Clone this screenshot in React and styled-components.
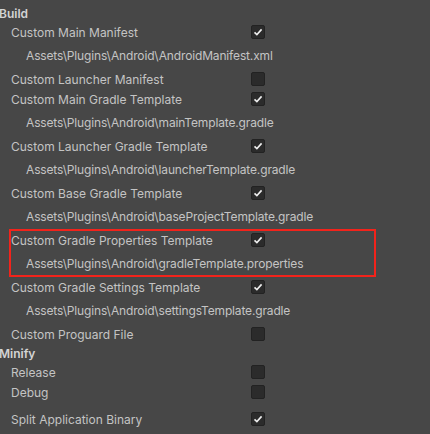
import React from "react";
import styled, { createGlobalStyle } from "styled-components";

const GlobalStyle = createGlobalStyle`
  html, body {
    margin: 0;
    padding: 0;
    background: #474747;
  }
  body {
    font-family: Inter, "Noto Sans", "Liberation Sans", sans-serif;
    font-size: 12px;
    color: #c4c4c4;
  }
`;

const Panel = styled.div`
  width: 430px;
  height: 434px;
  padding-top: 4px;
  box-sizing: border-box;
  overflow: hidden;
  display: flex;
  flex-direction: column;
`;

const Header = styled.div`
  height: 18px;
  display: flex;
  align-items: center;
  margin-left: -1px;
  font-weight: 600;
  color: #d4d4d4;
`;

const Row = styled.div`
  height: 20px;
  display: flex;
  align-items: center;
  padding-left: 11px;
  margin-top: ${(p) => p.$gap || 0}px;
`;

const Label = styled.span`
  width: 240px;
  white-space: nowrap;
`;

const PathRow = styled.div`
  height: 27px;
  display: flex;
  align-items: center;
  padding-left: 26px;
  padding-bottom: 1px;
  box-sizing: border-box;
  white-space: nowrap;
  letter-spacing: -0.15px;
`;

const Box = styled.div`
  width: 14px;
  height: 14px;
  box-sizing: border-box;
  background: #2b2b2b;
  border: 1px solid #222;
  border-radius: 2px;
  display: flex;
  align-items: center;
  justify-content: center;
`;

const Highlight = styled.div`
  position: relative;
  &::after {
    content: "";
    position: absolute;
    left: 9px;
    top: -1px;
    width: 367px;
    height: 48px;
    box-sizing: border-box;
    border: 2px solid #f2231b;
    pointer-events: none;
  }
`;

const Check = ({ on }) => (
  <Box>
    {on && (
      <svg width="10" height="10" viewBox="0 0 10 10">
        <path d="M1.5 5.3 L3.9 7.6 L8.6 2.4" fill="none" stroke="#eeeeee" strokeWidth="1.6" />
      </svg>
    )}
  </Box>
);

const Toggle = ({ label, on, gap }) => (
  <Row $gap={gap}>
    <Label>{label}</Label>
    <Check on={on} />
  </Row>
);

const templates = [
  { label: "Custom Main Manifest", path: "Assets\\Plugins\\Android\\AndroidManifest.xml" },
  { label: "Custom Launcher Manifest" },
  { label: "Custom Main Gradle Template", path: "Assets\\Plugins\\Android\\mainTemplate.gradle" },
  { label: "Custom Launcher Gradle Template", path: "Assets\\Plugins\\Android\\launcherTemplate.gradle" },
  { label: "Custom Base Gradle Template", path: "Assets\\Plugins\\Android\\baseProjectTemplate.gradle" },
  {
    label: "Custom Gradle Properties Template",
    path: "Assets\\Plugins\\Android\\gradleTemplate.properties",
    marked: true,
  },
  { label: "Custom Gradle Settings Template", path: "Assets\\Plugins\\Android\\settingsTemplate.gradle" },
  { label: "Custom Proguard File" },
];

export default function App() {
  return (
    <>
      <GlobalStyle />
      <Panel>
        <Header>Build</Header>
        {templates.map((t) => {
          const body = (
            <>
              <Toggle label={t.label} on={!!t.path} />
              {t.path && <PathRow>{t.path}</PathRow>}
            </>
          );
          return t.marked ? (
            <Highlight key={t.label}>{body}</Highlight>
          ) : (
            <React.Fragment key={t.label}>{body}</React.Fragment>
          );
        })}
        <Header>Minify</Header>
        <Toggle label="Release" />
        <Toggle label="Debug" />
        <Toggle label="Split Application Binary" on gap={7} />
      </Panel>
    </>
  );
}
